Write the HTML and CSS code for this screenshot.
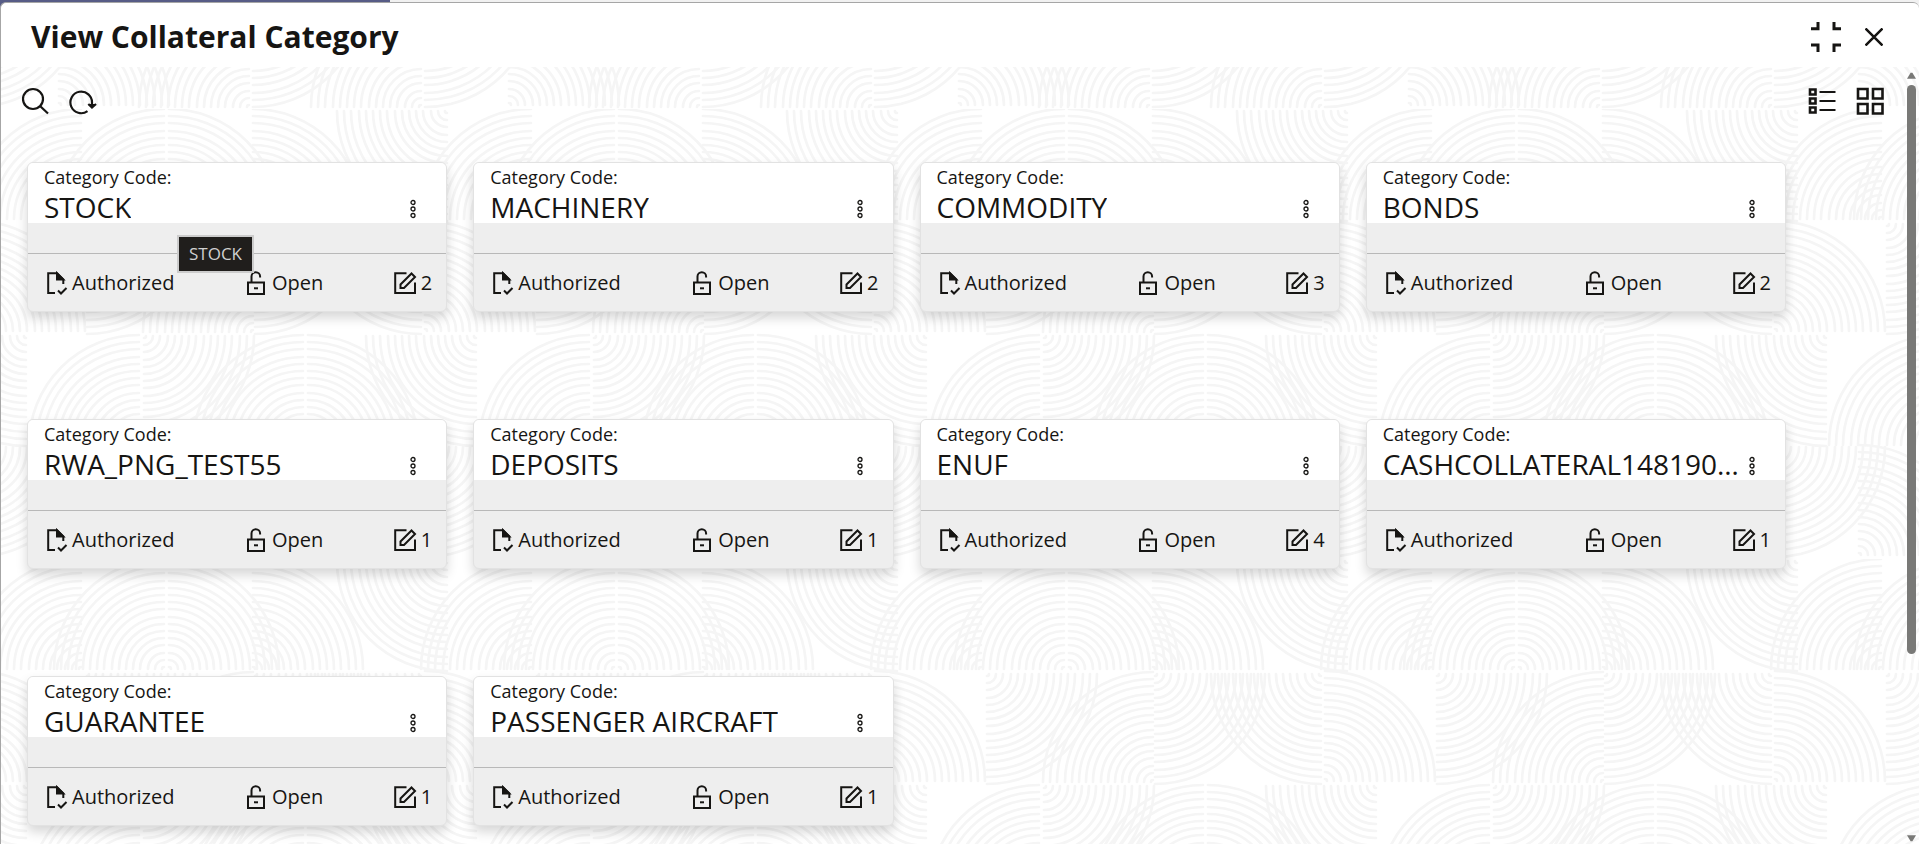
FILE: index.html
```html
<!DOCTYPE html>
<html lang="en">
  <head>
    <meta charset="UTF-8" />
    <meta name="viewport" content="width=device-width, initial-scale=1.0" />
    <title>View Collateral Category</title>
    <link rel="stylesheet" href="styles.css">
  </head>
  <body>
    <svg class="sprite" aria-hidden="true">
      <symbol id="icon-doc" viewBox="0 0 24 24">
        <path d="M11 22H4.2V2.2H13l6.300 6.300V13" />
        <path d="M13 2.200V8.500H19.300Z" fill="currentColor" />
        <path d="M14 19.500l3 3 5.500-5.500" />
      </symbol>
      <symbol id="icon-lock" viewBox="0 0 24 24">
        <path d="M4 11.500H20V23H4Z" />
        <path d="M7.500 11.500V5.500a4.300 4.300 0 0 1 8.600 0V6.500" />
        <path d="M10 17.300h4" />
      </symbol>
      <symbol id="icon-edit" viewBox="0 0 24 24">
        <path d="M13.500 2.200H2.200V22H22V11.500" />
        <path d="M7.500 17V13.500L18.500 2.500L22 6L11 17Z" />
      </symbol>
      <symbol id="icon-dots" viewBox="0 0 8 20">
        <circle cx="4" cy="3.500" r="2" />
        <circle cx="4" cy="10" r="2" />
        <circle cx="4" cy="16.500" r="2" />
      </symbol>
    </svg>

    <section class="dialog" role="dialog" aria-labelledby="dialog-title">
      <header class="dialog-header">
        <h1 id="dialog-title">View Collateral Category</h1>
        <div class="dialog-actions">
          <button type="button" class="icon-btn" aria-label="Collapse">
            <svg class="icon-collapse" viewBox="0 0 30 30"><path d="M0 6.800H7V0M23 0V6.800H30M0 23H7V30M23 30V23H30" /></svg>
          </button>
          <button type="button" class="icon-btn" aria-label="Close">
            <svg class="icon-close" viewBox="0 0 18 18"><path d="M.5.500l17 17M17.500.500l-17 17" /></svg>
          </button>
        </div>
      </header>

      <div class="dialog-body">
        <main class="content">
          <div class="toolbar">
            <button type="button" class="icon-btn" aria-label="Search">
              <svg class="icon-tool" viewBox="0 0 28 28"><circle cx="12" cy="12" r="10" /><path d="M19 19l8 7.500" /></svg>
            </button>
            <button type="button" class="icon-btn" aria-label="Refresh">
              <svg class="icon-tool" viewBox="0 0 28 28"><path d="M18.500 24.200A10.800 10.800 0 1 1 23 16v4" /><path d="M19.300 17l3.700 3.600L27 17" fill="currentColor" /></svg>
            </button>
            <span class="spacer"></span>
            <button type="button" class="icon-btn" aria-label="List view">
              <svg class="icon-tool" viewBox="0 0 28 28"><path class="thick" d="M2 2.500H7.500V7.500H2ZM2 11.500H7.500V16.500H2ZM2 20.500H7.500V25.500H2Z" /><path d="M11.500 5H27.500M11.500 14H27.500M11.500 23H27.500" /></svg>
            </button>
            <button type="button" class="icon-btn" aria-label="Tile view">
              <svg class="icon-tool" viewBox="0 0 28 28"><path class="thick" d="M2 2H11.500V11.500H2ZM17 2H26.500V11.500H17ZM2 17H11.500V26.500H2ZM17 17H26.500V26.500H17Z" /></svg>
            </button>
          </div>

          <div class="cards" id="cards"></div>
        </main>

        <div class="scrollbar" aria-hidden="true">
          <svg viewBox="0 0 10 7"><path d="M4 .5h2L10 7H0Z" /></svg>
          <div class="track"><div class="thumb"></div></div>
          <svg viewBox="0 0 10 7"><path d="M0 0h10L6 6.500H4Z" /></svg>
        </div>
      </div>
    </section>

    <script>
      const categories = [
        { code: "STOCK", mods: 2, tooltip: true },
        { code: "MACHINERY", mods: 2 },
        { code: "COMMODITY", mods: 3 },
        { code: "BONDS", mods: 2 },
        { code: "RWA_PNG_TEST55", mods: 1 },
        { code: "DEPOSITS", mods: 1 },
        { code: "ENUF", mods: 4 },
        { code: "CASHCOLLATERAL1481900000", mods: 1 },
        { code: "GUARANTEE", mods: 1 },
        { code: "PASSENGER AIRCRAFT", mods: 1 },
      ];

      document.getElementById("cards").innerHTML = categories
        .map(
          (item) => `
          <article class="card">
            <div class="card-head">
              <div class="card-label">Category Code:</div>
              <div class="card-title">
                <h2>${item.code}</h2>
                <button type="button" class="icon-btn menu-btn" aria-label="Actions">
                  <svg class="icon-dots"><use href="#icon-dots" /></svg>
                </button>
              </div>
            </div>
            <div class="card-band"></div>
            <div class="card-foot">
              <span class="status"><svg class="icon"><use href="#icon-doc" /></svg>Authorized</span>
              <span class="status"><svg class="icon"><use href="#icon-lock" /></svg>Open</span>
              <span class="status"><svg class="icon"><use href="#icon-edit" /></svg>${item.mods}</span>
            </div>
            ${item.tooltip ? `<div class="tooltip" role="tooltip">${item.code}</div>` : ""}
          </article>`
        )
        .join("");
    </script>
  </body>
</html>
```

FILE: styles.css
```css
:root {
  --text-color: #161513;
  --card-grey: #eeeeee;
  --border-grey: #a6a6a6;
  --scroll-grey: #797977;
}

* {
  margin: 0;
  padding: 0;
  box-sizing: border-box;
}

body {
  height: 100vh;
  padding-top: 2px;
  display: flex;
  flex-direction: column;
  overflow: hidden;
  font-family: "Open Sans", "Noto Sans", sans-serif;
  color: var(--text-color);
  background: linear-gradient(to right, #575c86 20.3%, #f1f1f1 20.3%);
}

.sprite {
  display: none;
}

svg {
  display: block;
  fill: none;
  stroke: currentColor;
  stroke-width: 2;
}

.icon-btn {
  display: flex;
  align-items: center;
  justify-content: center;
  border: none;
  background: none;
  color: inherit;
  cursor: pointer;
}

/* dialog */
.dialog {
  flex: 1;
  min-height: 0;
  display: flex;
  flex-direction: column;
  border: 1px solid var(--border-grey);
  border-bottom: none;
  border-right: none;
  border-radius: 6px 6px 0 0;
  background-color: #fff;
  overflow: hidden;
}

.dialog-header {
  flex: none;
  height: 64px;
  padding: 3px 36px 0 30px;
  display: flex;
  align-items: center;
  justify-content: space-between;
}

.dialog-header h1 {
  font-size: 30px;
  font-weight: 700;
  line-height: 40px;
}

.dialog-actions {
  display: flex;
  align-items: center;
  gap: 24px;
}

.icon-collapse {
  width: 30px;
  height: 30px;
  stroke-width: 3;
}

.icon-close {
  width: 18px;
  height: 18px;
  stroke-width: 2.500;
}

.dialog-body {
  flex: 1;
  min-height: 0;
  display: flex;
  background-image: url("data:image/svg+xml,%3Csvg xmlns='http://www.w3.org/2000/svg' width='450' height='450' fill='none' stroke='%23f5f5f5' stroke-width='2.7' stroke-linecap='round'%3E%3Cdefs%3E%3Cpath id='q' d='M-110 0A110 110 0 0 1 0-110M-103 0A103 103 0 0 1 0-103M-96 0A96 96 0 0 1 0-96M-88 0A88 88 0 0 1 0-88M-81 0A81 81 0 0 1 0-81M-74 0A74 74 0 0 1 0-74M-67 0A67 67 0 0 1 0-67M-60 0A60 60 0 0 1 0-60M-52 0A52 52 0 0 1 0-52M-45 0A45 45 0 0 1 0-45M-38 0A38 38 0 0 1 0-38M-31 0A31 31 0 0 1 0-31M-24 0A24 24 0 0 1 0-24M-16 0A16 16 0 0 1 0-16M-9 0A9 9 0 0 1 0-9M-2 0A2 2 0 0 1 0-2'/%3E%3Cg id='t'%3E%3Cuse href='%23q' transform='translate(80 110)'/%3E%3Cuse href='%23q' transform='translate(163 110)'/%3E%3Cuse href='%23q' transform='translate(168 110) rotate(90)'/%3E%3Cuse href='%23q' transform='translate(252 110) rotate(90)'/%3E%3Cuse href='%23q' transform='translate(446 2) rotate(270)'/%3E%3Cuse href='%23q' transform='translate(86 115) rotate(180)'/%3E%3Cuse href='%23q' transform='translate(252 223)'/%3E%3Cuse href='%23q' transform='translate(254 115) rotate(180)'/%3E%3Cuse href='%23q' transform='translate(420 115) rotate(270)'/%3E%3Cuse href='%23q' transform='translate(424 222) rotate(90)'/%3E%3Cuse href='%23q' transform='translate(138 336)'/%3E%3Cuse href='%23q' transform='translate(143 227) rotate(180)'/%3E%3Cuse href='%23q' transform='translate(302 336)'/%3E%3Cuse href='%23q' transform='translate(307 336) rotate(90)'/%3E%3Cuse href='%23q' transform='translate(475 227) rotate(270)'/%3E%3Cuse href='%23q' transform='translate(58 446) rotate(90)'/%3E%3Cuse href='%23q' transform='translate(248 448)'/%3E%3Cuse href='%23q' transform='translate(252 338) rotate(180)'/%3E%3Cuse href='%23q' transform='translate(420 448)'/%3E%3Cuse href='%23q' transform='translate(424 338) rotate(180)'/%3E%3C/g%3E%3C/defs%3E%3Cuse href='%23t'/%3E%3Cuse href='%23t' x='-450'/%3E%3Cuse href='%23t' x='450'/%3E%3C/svg%3E");
  background-position: 0 42px;
}

.content {
  flex: 1;
  min-width: 0;
}

.toolbar {
  display: flex;
  gap: 20px;
  padding: 20px 23px 47px 20px;
}

.icon-tool {
  width: 28px;
  height: 28px;
  stroke-width: 2.200;
}

.icon-tool .thick {
  stroke-width: 2.600;
}

.spacer {
  flex: 1;
}

/* cards */
.cards {
  display: grid;
  grid-template-columns: repeat(4, minmax(0, 1fr));
  gap: 107px 26px;
  padding: 0 121px 17px 26px;
}

.card {
  position: relative;
  border: 1px solid #e2e2e2;
  border-radius: 6px;
  background-color: var(--card-grey);
  box-shadow: 0 6px 12px rgba(0, 0, 0, 0.16);
}

.card-head {
  padding: 0 21px 0 16px;
  border-radius: 5px 5px 0 0;
  background-color: #fff;
}

.card-label {
  font-size: 18px;
  line-height: 28px;
}

.card-title {
  display: flex;
  align-items: center;
  justify-content: space-between;
  height: 32px;
}

.card-title h2 {
  min-width: 0;
  font-size: 28px;
  font-weight: 400;
  line-height: 40px;
  white-space: nowrap;
  overflow: hidden;
  text-overflow: ellipsis;
}

.menu-btn {
  flex: none;
  width: 24px;
  height: 32px;
  padding-top: 4px;
}

.icon-dots {
  width: 8px;
  height: 20px;
  stroke-width: 1.300;
}

.card-band {
  height: 30px;
}

.card-foot {
  display: flex;
  align-items: center;
  justify-content: space-between;
  height: 58px;
  padding: 0 14px 0 16px;
  border-top: 1px solid #b8b8b8;
}

.status {
  display: flex;
  align-items: center;
  gap: 4px;
  font-size: 20px;
  line-height: 28px;
}

.icon {
  width: 24px;
  height: 24px;
}

.tooltip {
  position: absolute;
  top: 72px;
  left: 149px;
  padding: 5px 10px;
  border: 2px solid #cccccc;
  background-color: #201e1c;
  color: #d0d0d0;
  font-size: 17px;
  line-height: 24px;
}

/* scrollbar */
.scrollbar {
  flex: none;
  width: 12px;
  padding: 5px 2px 2px 0;
  display: flex;
  flex-direction: column;
  gap: 6px;
}

.scrollbar svg {
  flex: none;
  width: 9px;
  height: 7px;
  fill: var(--scroll-grey);
  stroke: none;
}

.track {
  flex: 1;
}

.thumb {
  width: 9px;
  height: 76.5%;
  border-radius: 5px;
  background-color: var(--scroll-grey);
}
```
